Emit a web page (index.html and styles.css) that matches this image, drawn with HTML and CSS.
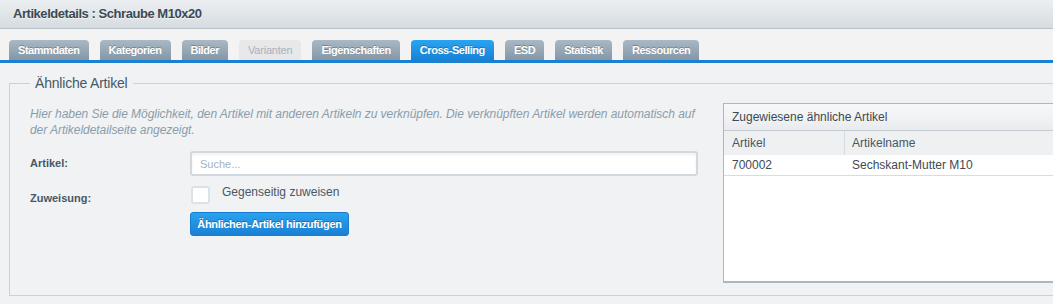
FILE: index.html
```html
<!DOCTYPE html>
<html lang="de">
<head>
    <meta charset="UTF-8">
    <title>Artikeldetails : Schraube M10x20</title>
    <link rel="stylesheet" href="styles.css">
</head>
<body>
    <div class="titlebar">Artikeldetails : Schraube M10x20</div>
    <div class="tabbar">
        <span class="tab">Stammdaten</span>
        <span class="tab">Kategorien</span>
        <span class="tab">Bilder</span>
        <span class="tab disabled">Varianten</span>
        <span class="tab">Eigenschaften</span>
        <span class="tab active">Cross-Selling</span>
        <span class="tab">ESD</span>
        <span class="tab">Statistik</span>
        <span class="tab">Ressourcen</span>
    </div>
    <main class="content">
        <fieldset class="similar">
            <legend>Ähnliche Artikel</legend>
            <div class="columns">
                <div class="form-col">
                    <p class="hint">Hier haben Sie die Möglichkeit, den Artikel mit anderen Artikeln zu verknüpfen. Die verknüpften Artikel werden automatisch auf der Artikeldetailseite angezeigt.</p>
                    <div class="form-row">
                        <label class="field-label" for="search">Artikel:</label>
                        <input class="search" type="text" id="search" placeholder="Suche...">
                    </div>
                    <div class="form-row check-row">
                        <span class="field-label">Zuweisung:</span>
                        <span class="checkbox"></span>
                        <span class="check-text">Gegenseitig zuweisen</span>
                    </div>
                    <div class="form-row">
                        <span class="field-label"></span>
                        <button class="add-btn" type="button">Ähnlichen-Artikel hinzufügen</button>
                    </div>
                </div>
                <div class="grid">
                    <div class="grid-title">Zugewiesene ähnliche Artikel</div>
                    <div class="grid-head">
                        <div class="cell col-nr">Artikel</div>
                        <div class="cell col-name">Artikelname</div>
                    </div>
                    <div class="grid-row">
                        <div class="cell col-nr">700002</div>
                        <div class="cell col-name">Sechskant-Mutter M10</div>
                    </div>
                </div>
            </div>
        </fieldset>
    </main>
</body>
</html>
```

FILE: styles.css
```css
body {
    margin: 0;
    padding: 0;
    width: 1053px;
    height: 304px;
    overflow: hidden;
    font-family: "Liberation Sans", Arial, sans-serif;
    background-color: #f0f2f4;
    color: #475866;
}

.titlebar {
    height: 28px;
    line-height: 28px;
    padding-left: 13px;
    font-size: 13px;
    font-weight: bold;
    letter-spacing: -0.45px;
    color: #3b4954;
    background: linear-gradient(#eceff1, #d6dce1);
    border-bottom: 1px solid #b7c3cb;
    text-shadow: 0 1px 0 rgba(255, 255, 255, 0.6);
}

.tabbar {
    display: flex;
    gap: 11px;
    padding: 11px 9px 0;
    background-color: #f3f3f3;
    border-bottom: 3px solid #1b7fd2;
}

.tab {
    height: 20px;
    line-height: 21px;
    padding: 0 9px;
    font-size: 11px;
    font-weight: bold;
    letter-spacing: -0.45px;
    color: #fff;
    background: linear-gradient(#a9b8c4, #8497a6);
    border-radius: 4px 4px 0 0;
    text-shadow: 0 -1px 0 rgba(0, 0, 0, 0.25);
}

.tab.disabled {
    background: #e6e8ea;
    color: #a9b2b9;
    font-weight: normal;
    letter-spacing: -0.2px;
    text-shadow: none;
}

.tab.active {
    background: linear-gradient(#2ba4f0, #1682d8);
}

.content {
    padding-top: 12px;
}

/* runs to the right edge, its right side is cut off like in the app */
.similar {
    box-sizing: border-box;
    margin: 0 0 0 9px;
    padding: 12px 0 12px 20px;
    width: 1044px;
    border: 1px solid #cbd1d6;
    border-right: none;
}

.similar legend {
    padding: 0 5px;
    font-size: 14px;
    line-height: 16px;
    letter-spacing: -0.2px;
    color: #475866;
}

.columns {
    display: flex;
    gap: 25px;
    align-items: flex-start;
}

.form-col {
    width: 668px;
    flex-shrink: 0;
    padding-top: 3px;
}

.hint {
    margin: 0 -12px 13px 0;
    font-size: 12px;
    line-height: 16px;
    font-style: italic;
    letter-spacing: -0.05px;
    color: #8b9dab;
}

.form-row {
    display: flex;
    align-items: flex-start;
}

.field-label {
    width: 160px;
    flex-shrink: 0;
    font-size: 11px;
    font-weight: bold;
    color: #475866;
    line-height: 25px;
}

.search {
    box-sizing: border-box;
    width: 508px;
    height: 25px;
    margin: 0;
    padding: 0 8px;
    font-family: "Liberation Sans", Arial, sans-serif;
    font-size: 11px;
    border: 2px solid #d2d9de;
    border-radius: 3px;
    background: #fff;
    box-shadow: inset 0 2px 3px rgba(0, 0, 0, 0.06);
    outline: none;
}

.search::placeholder {
    color: #a7b2bc;
}

.check-row {
    margin-top: 10px;
    height: 18px;
}

.check-row .field-label {
    line-height: 14px;
    margin-top: 5px;
}

.checkbox {
    box-sizing: border-box;
    width: 19px;
    height: 18px;
    margin-left: 1px;
    border: 2px solid #dde2e6;
    border-radius: 3px;
    background: #fff;
}

.check-text {
    margin-left: 12px;
    margin-top: -1px;
    font-size: 12px;
    line-height: 14px;
    color: #475866;
}

.add-btn {
    margin-top: 8px;
    width: 159px;
    height: 24px;
    padding: 0;
    font-family: "Liberation Sans", Arial, sans-serif;
    font-size: 11px;
    font-weight: bold;
    letter-spacing: -0.3px;
    color: #fff;
    border: 1px solid #1a7ccc;
    border-radius: 3px;
    background: linear-gradient(#2aa3ef, #1a80d5);
    text-shadow: 0 -1px 0 rgba(0, 0, 0, 0.3);
    cursor: pointer;
}

.grid {
    flex: 1;
    height: 177px;
    border: 1px solid #a9b8c1;
    border-right: none;
    border-bottom-width: 2px;
    background: #fff;
    font-size: 12px;
    color: #3d4a54;
}

.grid-title {
    height: 26px;
    line-height: 26px;
    padding-left: 8px;
    background: linear-gradient(#f7f8f9, #e9ecef);
    border-bottom: 1px solid #c4ccd2;
}

.grid-head,
.grid-row {
    display: flex;
}

.grid-head {
    height: 24px;
    line-height: 24px;
    background: #eef0f2;
    color: #475866;
}

.grid-row {
    height: 20px;
    line-height: 20px;
    border-bottom: 1px solid #d6dde2;
}

.cell {
    padding-left: 8px;
}

.col-nr {
    box-sizing: border-box;
    width: 121px;
}

.grid-head .col-nr {
    border-right: 1px solid #d6dde2;
}

.col-name {
    padding-left: 7px;
}
```
